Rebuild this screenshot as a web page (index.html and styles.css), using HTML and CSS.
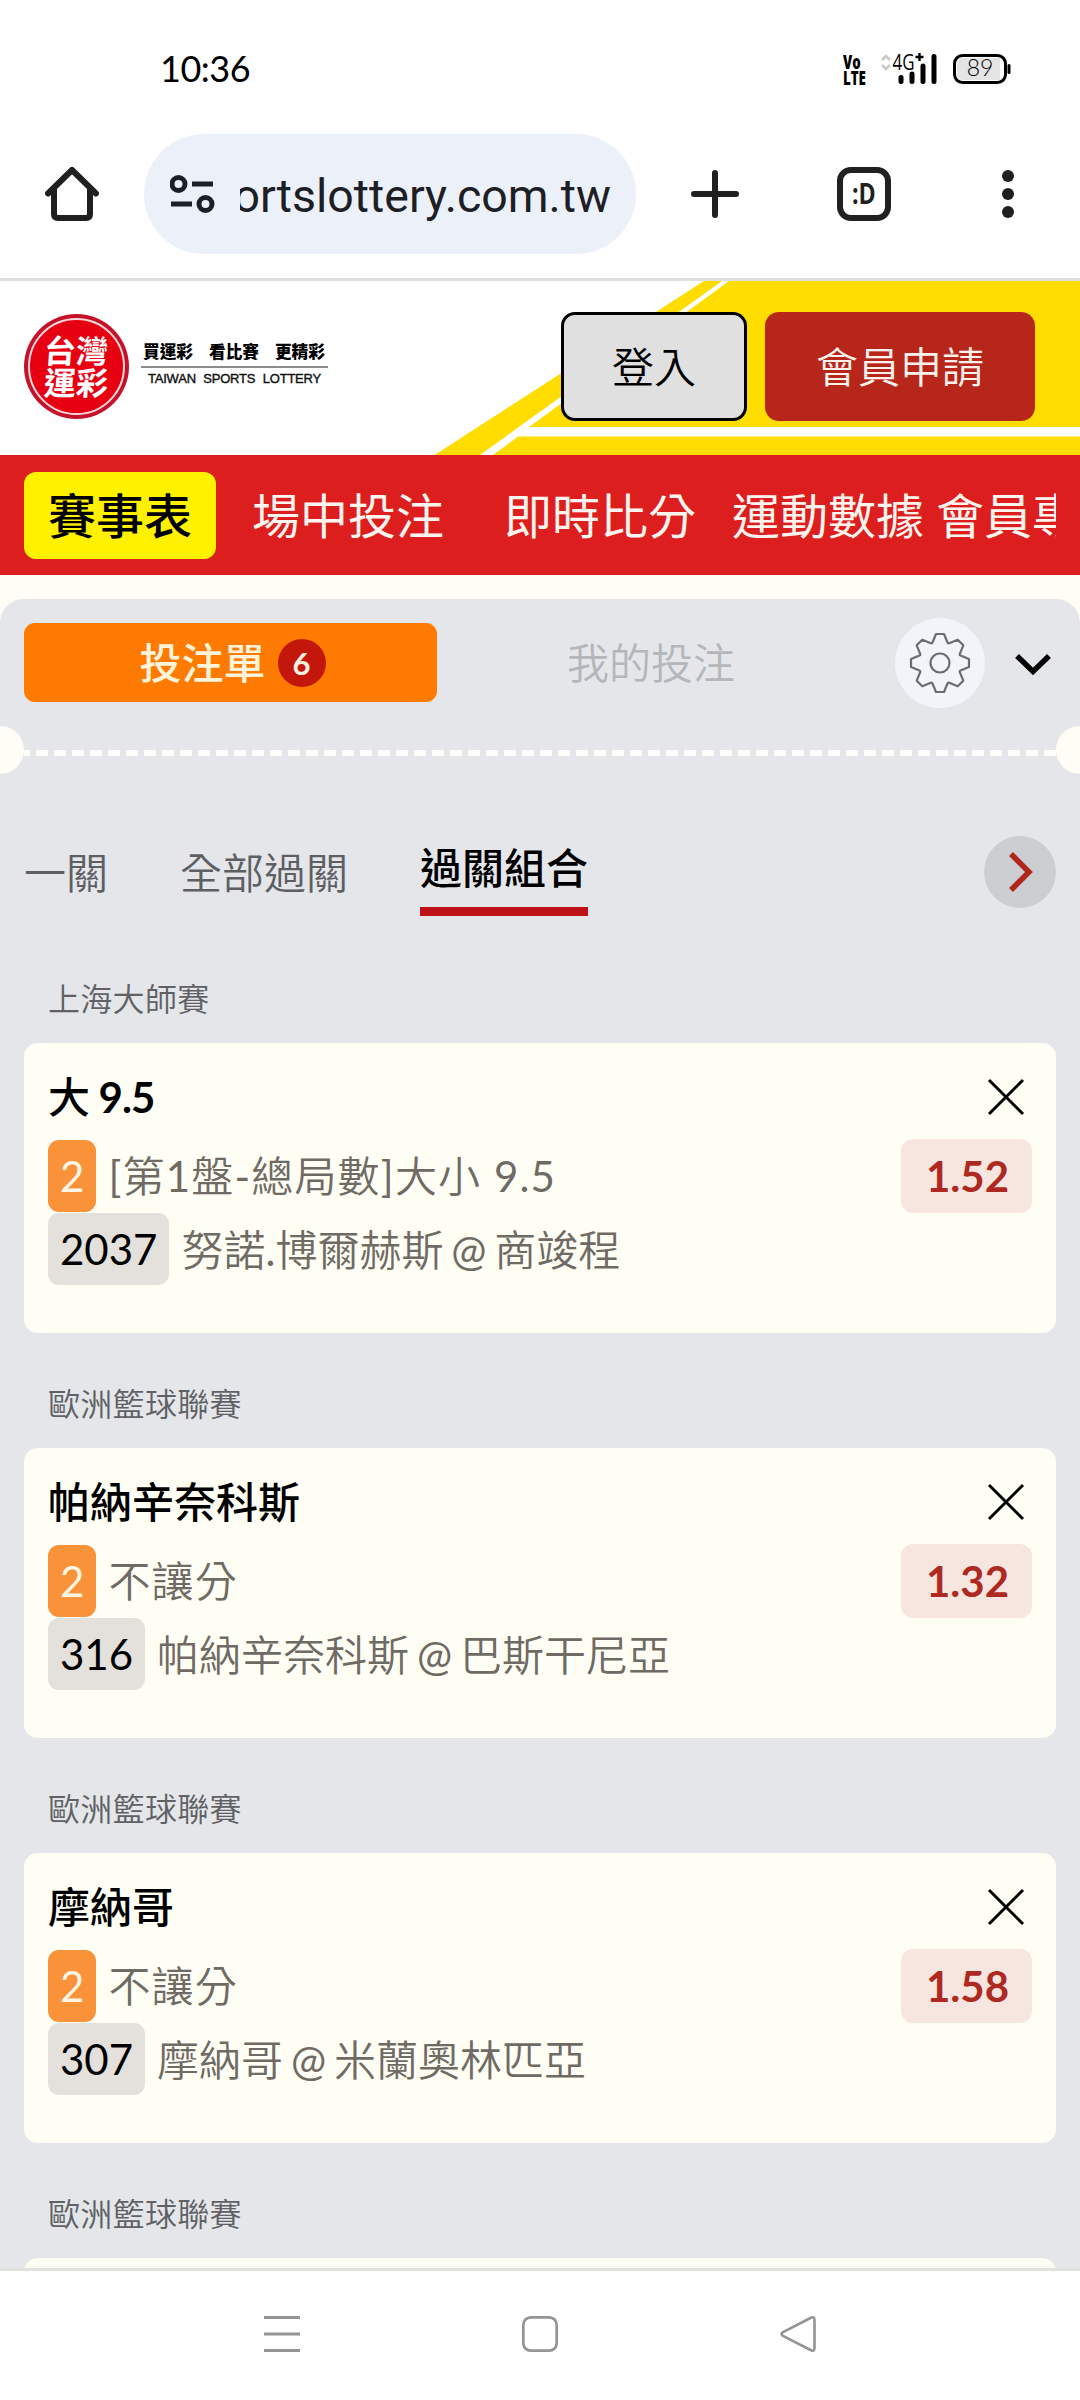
FILE: index.html
```html
<!DOCTYPE html>
<html lang="zh-Hant-TW">
<head>
<meta charset="utf-8">
<title>台灣運彩</title>
<link rel="stylesheet" href="styles.css">
</head>
<body>
<div class="app">
  <div class="status">
    <span class="time">10:36</span>
    <div class="indicators">
      <div class="volte"><span>Vo</span><span>LTE</span></div>
      <svg class="signal" width="58" height="34" viewBox="0 0 58 34">
        <path d="M2 6l4-4 4 4M2 11l4 4 4-4" fill="none" stroke="#c9c9c9" stroke-width="2.6"/>
        <text x="12.500" y="15.500" class="net" textLength="22" lengthAdjust="spacingAndGlyphs">4G</text>
        <path d="M39.500 -1v8M35.500 3h8" stroke="#000" stroke-width="2.400"/>
        <path d="M21 23.500v4M32 20v7.500M43 12v15.500M54 2.500v25" stroke="#000" stroke-width="5" stroke-linecap="round"/>
      </svg>
      <svg class="battery" width="60" height="32" viewBox="0 0 60 32">
        <rect x="1.500" y="1.500" width="51" height="27" rx="8" fill="#fff" stroke="#000" stroke-width="3"/>
        <path d="M9 4h38v22H9a5 5 0 0 1-5-5V9a5 5 0 0 1 5-5z" fill="#e4e4e4"/>
        <path d="M56 11.500v7" stroke="#000" stroke-width="3" stroke-linecap="round"/>
        <text x="27" y="22" class="level" text-anchor="middle">89</text>
      </svg>
    </div>
  </div>

  <div class="toolbar">
    <svg class="home" width="54" height="56" viewBox="0 0 54 56">
      <path d="M3 28.500L27 5l24 23.500M9 24v25q0 4 4 4h28q4 0 4-4V24" fill="none" stroke="#202020" stroke-width="6" stroke-linecap="round" stroke-linejoin="round"/>
    </svg>
    <div class="omnibox">
      <svg width="46" height="40" viewBox="0 0 46 40" fill="none" stroke="#1c2024" stroke-width="5">
        <circle cx="8.500" cy="10" r="6.500"/><circle cx="35.500" cy="30" r="6.500"/>
        <path d="M22 10h21M1 30h21"/>
      </svg>
      <div class="url"><span>sportslottery.com.tw</span></div>
    </div>
    <svg class="plus" width="50" height="50" viewBox="0 0 50 50">
      <path d="M25 4v42M4 25h42" stroke="#202020" stroke-width="6" stroke-linecap="round"/>
    </svg>
    <div class="tabcount"><span>:D</span></div>
    <svg class="more" width="14" height="50" viewBox="0 0 14 50" fill="#202020">
      <circle cx="7" cy="7" r="6"/><circle cx="7" cy="25" r="6"/><circle cx="7" cy="43" r="6"/>
    </svg>
  </div>

  <main class="page">
    <header class="masthead">
      <svg class="swoosh" width="1080" height="174" viewBox="0 0 1080 174">
        <path d="M704 0H1080V174H434.500z" fill="#fd0"/>
        <path d="M722 0h7L529 146h551v9.500H518L493 174h-13z" fill="#fff"/>
      </svg>
      <div class="brand">
        <div class="seal"><div class="seal-text"><span>台灣</span><span>運彩</span></div></div>
        <div class="slogan">
          <div class="zh"><span>買運彩</span><span>看比賽</span><span>更精彩</span></div>
          <div class="en">TAIWAN SPORTS LOTTERY</div>
        </div>
      </div>
      <button class="btn login">登入</button>
      <button class="btn join">會員申請</button>
    </header>

    <nav class="mainnav">
      <div class="track">
        <a class="on">賽事表</a><a class="wide">場中投注</a><a class="wide2">即時比分</a><a>運動數據</a><a>會員專區</a>
      </div>
    </nav>

    <section class="slip">
      <div class="slip-tabs">
        <div class="mine-on">投注單<span class="count">6</span></div>
        <div class="mine">我的投注</div>
        <div class="gear">
          <svg width="64" height="64" viewBox="-32 -32 64 64" fill="none" stroke="#6b6d70" stroke-width="2.200" stroke-linejoin="round">
            <path d="M-7.500-20.500L-4-29H4L7.500-20.500Q8-19.300 9.200-19.800L17.700-23.300L23.300-17.700L19.800-9.200Q19.300-8 20.500-7.500L29-4V4L20.500 7.500Q19.300 8 19.800 9.200L23.300 17.700L17.700 23.300L9.200 19.800Q8 19.300 7.500 20.500L4 29H-4L-7.500 20.500Q-8 19.300-9.200 19.800L-17.700 23.300L-23.300 17.700L-19.800 9.200Q-19.300 8-20.500 7.500L-29 4V-4L-20.500-7.500Q-19.300-8-19.800-9.200L-23.300-17.700L-17.700-23.300L-9.200-19.800Q-8-19.300-7.500-20.500z"/>
            <circle r="9.500"/>
          </svg>
        </div>
        <svg class="fold" width="38" height="24" viewBox="0 0 38 24"><path d="M3 3L19 18.500 35 3" fill="none" stroke="#000" stroke-width="5.500"/></svg>
      </div>
      <div class="perforation"><i></i><div class="dashes"></div><i></i></div>
      <div class="modes">
        <span>一關</span><span>全部過關</span><span class="on">過關組合</span>
        <div class="next"><svg width="26" height="42" viewBox="0 0 26 42"><path d="M2 3L20 21 2 39" fill="none" stroke="#b0271f" stroke-width="5.500"/></svg></div>
      </div>

      <h3 class="league">上海大師賽</h3>
      <article class="card">
        <div class="row top"><b>大 <em>9.5</em></b><svg class="x" width="38" height="38" viewBox="0 0 38 38"><path d="M2 2l34 34M36 2L2 36" stroke="#000" stroke-width="3"/></svg></div>
        <div class="row mid"><span class="tag">2</span><span class="market"><em>[</em>第<em>1</em>盤<em>-</em>總局數<em>]</em>大小 <em>9.5</em></span><span class="odds">1.52</span></div>
        <div class="row"><span class="tag no">2037</span><span class="teams">努諾<em>.</em>博爾赫斯 <em>@</em> 商竣程</span></div>
      </article>

      <h3 class="league">歐洲籃球聯賽</h3>
      <article class="card">
        <div class="row top"><b>帕納辛奈科斯</b><svg class="x" width="38" height="38" viewBox="0 0 38 38"><path d="M2 2l34 34M36 2L2 36" stroke="#000" stroke-width="3"/></svg></div>
        <div class="row mid"><span class="tag">2</span><span class="market">不讓分</span><span class="odds">1.32</span></div>
        <div class="row"><span class="tag no">316</span><span class="teams">帕納辛奈科斯 <em>@</em> 巴斯干尼亞</span></div>
      </article>

      <h3 class="league">歐洲籃球聯賽</h3>
      <article class="card">
        <div class="row top"><b>摩納哥</b><svg class="x" width="38" height="38" viewBox="0 0 38 38"><path d="M2 2l34 34M36 2L2 36" stroke="#000" stroke-width="3"/></svg></div>
        <div class="row mid"><span class="tag">2</span><span class="market">不讓分</span><span class="odds">1.58</span></div>
        <div class="row"><span class="tag no">307</span><span class="teams">摩納哥 <em>@</em> 米蘭奧林匹亞</span></div>
      </article>

      <h3 class="league">歐洲籃球聯賽</h3>
      <article class="card"></article>
    </section>
  </main>

  <div class="sysnav">
    <svg width="40" height="40" viewBox="0 0 40 40"><path d="M2 3.500h36M2 20h36M2 36.500h36" stroke="#949494" stroke-width="3"/></svg>
    <svg width="40" height="40" viewBox="0 0 40 40"><rect x="3.300" y="3.300" width="33.400" height="33.400" rx="7.500" fill="none" stroke="#949494" stroke-width="2.700"/></svg>
    <svg width="40" height="40" viewBox="0 0 40 40"><path d="M32.500 4Q36.500 2 36.500 6V34Q36.500 38 32.500 36L5 21.800Q2 20 5 18.200z" fill="none" stroke="#949494" stroke-width="2.600" stroke-linejoin="round"/></svg>
  </div>
</div>
</body>
</html>
```
FILE: styles.css
```css
* { box-sizing: border-box; }
body { margin: 0; background: #fff; }
.app {
  width: 1080px; height: 2400px; overflow: hidden;
  display: flex; flex-direction: column;
  font-family: Lato, "Noto Sans CJK TC", sans-serif;
  font-size: 42px; white-space: nowrap;
}
svg { display: block; flex: none; }
em { font-style: normal; font-weight: 400; }

/* system status bar */
.status { height: 134px; flex: none; display: flex; justify-content: space-between; padding: 48px 67px 0 160px; }
.time { font-size: 36px; line-height: 41px; letter-spacing: -0.5px; color: #000; }
.indicators { display: flex; padding-top: 6px; }
.volte {
  width: 22px; margin-right: 15px; display: flex; flex-direction: column;
  font: 800 19px/16px "Open Sans", sans-serif; transform: scaleX(.7); transform-origin: left;
}
.signal { margin-right: 15px; overflow: visible; }
.net { font: 500 21px "Open Sans", sans-serif; }
.level { font: 300 23px Lato, sans-serif; }

/* browser toolbar */
.toolbar {
  height: 147px; flex: none; display: flex; align-items: flex-start;
  border-bottom: 3px solid #e0e0e0; padding-left: 45px;
}
.home { margin-top: 31px; }
.omnibox {
  margin-left: 45px; width: 492px; height: 120px; border-radius: 60px; background: #ecf0f9;
  display: flex; align-items: center; padding-left: 26px;
}
.url {
  margin-left: 24px; width: 371px; overflow: hidden; display: flex; justify-content: flex-end;
  font: 46.500px/70px Roboto, sans-serif; color: #1c2024; padding-top: 3px;
}
.plus { margin: 35px 0 0 54px; }
.tabcount {
  margin: 33px 0 0 97px; width: 54px; height: 54px; border: 6px solid #202020; border-radius: 14px;
  font: bold 29px/40px "Open Sans", sans-serif; color: #202020; display: flex; justify-content: center;
}
.tabcount span { transform: scaleX(.8); }
.more { margin: 35px 0 0 110px; }

.page { flex: 1; min-height: 0; overflow: hidden; background: #fffdf5; }

/* site header */
.masthead { position: relative; height: 174px; background: #fff; display: flex; align-items: flex-start; padding: 31px 45px 0 24px; }
.swoosh { position: absolute; left: 0; top: 0; }
.brand { position: relative; display: flex; margin-right: auto; padding-top: 2px; }
.seal {
  width: 105px; height: 105px; border-radius: 50%; padding: 4px; background: #c4122a;
}
.seal-text {
  width: 97px; height: 97px; border-radius: 50%; border: 2px solid #ffd9dc; background: #e60012;
  display: flex; flex-direction: column; align-items: center; justify-content: center;
  color: #fff; font-size: 32px; font-weight: 700; line-height: 32px;
}
.seal-text span { transform: skewX(-4deg); }
.slogan { margin-left: 12px; width: 187px; padding-top: 25px; }
.zh {
  display: flex; justify-content: space-between; padding: 0 3px 0 2px; height: 29px;
  border-bottom: 2px solid #8c8c8c; font-size: 16.700px; font-weight: 900; line-height: 26px; color: #000;
}
.en { font: 13px/16px "Liberation Sans", sans-serif; word-spacing: 4px; text-align: center; color: #111; margin-top: 3px; letter-spacing: -.2px; -webkit-text-stroke: .4px #111; }
.btn {
  position: relative; height: 109px; border-radius: 14px; border: 0; padding: 0;
  font-family: inherit; font-size: 42px; font-weight: 350; line-height: 111px;
}
.login { width: 186px; border: 3px solid #000; line-height: 105px; background: #e0e0e0; color: #000; }
.join { width: 270px; margin-left: 18px; background: #b7261b; color: #fff2ec; }

.mainnav { height: 120px; background: #dd1e1f; padding: 17px 24px 0; }
.track { display: flex; overflow: hidden; font-size: 48px; font-weight: 400; line-height: 88px; height: 87px; color: #fff4ee; }
.track a { flex: none; margin-right: 12px; }
.track .on { background: #fff100; color: #000; font-weight: 500; border-radius: 12px; padding: 0 24px; margin-right: 36px; height: 87px; }
.track .wide { margin-right: 60px; }
.track .wide2 { margin-right: 36px; }

/* betting slip */
.slip { margin-top: 24px; border-radius: 24px 24px 0 0; background: #e4e6ea; min-height: 1700px; }
.slip-tabs { display: flex; align-items: center; height: 127px; padding-left: 24px; }
.mine-on {
  width: 413px; height: 79px; border-radius: 11px; background: #ff7a00; color: #fff3da; font-weight: 500;
  display: flex; align-items: center; justify-content: center; line-height: 80px; padding-left: 4px;
}
.count {
  margin-left: 12px; width: 48px; height: 48px; border-radius: 50%; background: #c4170c; color: #fff0e0;
  font-size: 31px; font-weight: 700; line-height: 48px; text-align: center;
}
.mine { width: 413px; margin-left: 9px; padding-left: 121px; color: #b4b6ba; font-weight: 350; line-height: 80px; }
.gear { margin-left: 36px; width: 90px; height: 90px; border-radius: 50%; background: #f2f4f9; display: grid; place-items: center; }
.fold { margin: 5px 0 0 29px; }
.perforation { display: flex; align-items: center; height: 48px; overflow: hidden; }
.perforation i { width: 48px; height: 48px; border-radius: 50%; background: #fffdf5; flex: none; margin: 0 -24px; }
.perforation i:last-child { margin-left: 0; }
.dashes { flex: 1; height: 6px; margin: 6px 0 0 24px; background: repeating-linear-gradient(90deg, #fffefa 0 12px, transparent 12px 18px) -6px 0; }
.modes { display: flex; height: 214px; padding: 62px 24px 0; color: #5d5f63; font-weight: 350; line-height: 72px; align-items: flex-start; }
.modes span { margin: 1px 72px 0 0; }
.modes .on { color: #000; font-weight: 500; margin-top: 0; height: 80px; border-bottom: 9px solid #bd1318; line-height: 64px; }
.next { margin: 0 0 0 auto; width: 72px; height: 72px; border-radius: 50%; background: #cdced1; display: grid; place-items: center; padding-left: 3px; }

.league { margin: 0; height: 115px; padding: 34px 48px 0; font-size: 32px; line-height: 73px; font-weight: 350; letter-spacing: .3px; color: #5f6165; }
.modes + .league { height: 55px; padding-top: 0; line-height: 22px; }
.card { margin: 0 24px; height: 290px; border-radius: 14px; background: #fffef5; padding: 14px 24px 0; color: #6f6b64; }
.row { display: flex; align-items: center; height: 73px; }
.row.top { height: 82px; color: #000; justify-content: space-between; }
.row b { font-weight: 500; line-height: 50px; margin-top: -3px; word-spacing: -2px; }
.row b em { font-weight: 700; letter-spacing: -1px; }
.x { margin: -3px 7px 0 0; }
.tag { height: 72px; line-height: 73px; padding: 0 12px; margin-right: 12px; border-radius: 11px; background: #f99239; color: #fff6e6; }
.tag.no { background: #e4e1dc; color: #000; }
.market { letter-spacing: 1.200px; font-weight: 350; line-height: 50px; margin-top: 1px; }
.teams { font-weight: 350; word-spacing: -3.500px; line-height: 50px; margin-top: 2px; }
.odds { margin-left: auto; width: 131px; height: 74px; border-radius: 12px; background: #f7e6df; color: #ad2921; font-weight: 700; line-height: 75px; text-align: center; padding-left: 2px; }

/* system navigation */
.sysnav {
  height: 132px; flex: none; border-top: 3px solid #dfe1dd; background: #fff;
  display: flex; justify-content: space-between; padding: 43px 262px 0;
}
```
